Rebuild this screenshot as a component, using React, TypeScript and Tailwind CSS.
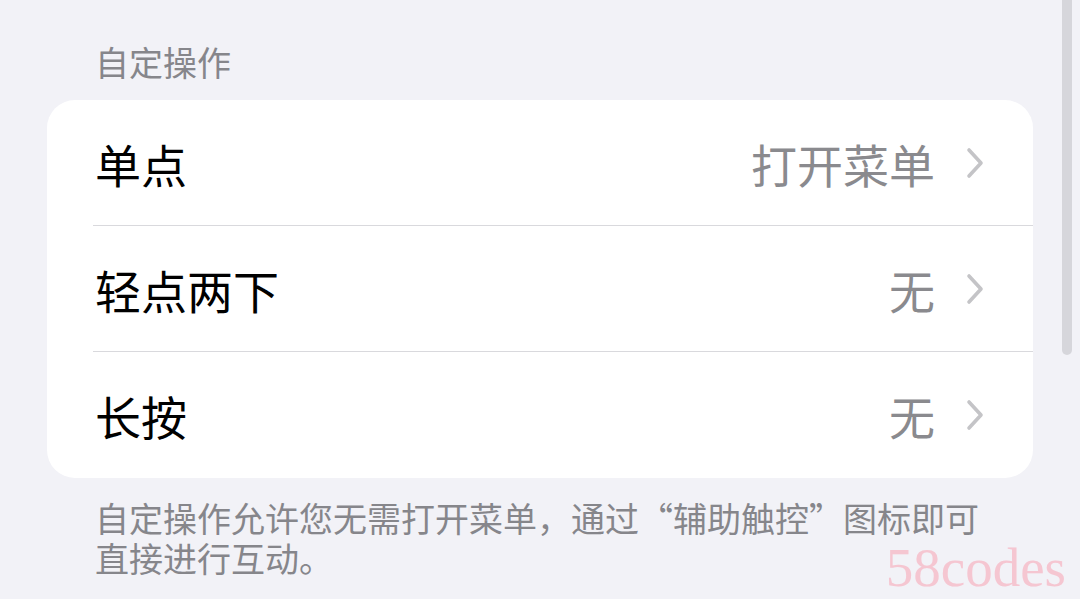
import React from 'react';

const rows = [
  { label: '单点', value: '打开菜单' },
  { label: '轻点两下', value: '无' },
  { label: '长按', value: '无' },
];

const Chevron: React.FC = () => (
  <svg width="20" height="32" viewBox="0 0 20 32" fill="none" className="shrink-0">
    <polyline
      points="4,3 16,16 4,29"
      stroke="#c4c4c7"
      strokeWidth="3.6"
      strokeLinecap="round"
      strokeLinejoin="round"
    />
  </svg>
);

const App: React.FC = () => {
  return (
    <div
      className="relative w-[1080px] h-[599px] overflow-hidden bg-[#f2f2f7] px-[47px]"
      style={{ fontFamily: '"Noto Sans CJK SC", "Noto Sans", sans-serif' }}
    >
      {/* section header */}
      <div className="pt-[42px] pb-[18px] pl-[48px] text-[34px] leading-[40px] text-[#86868b]">
        自定操作
      </div>

      {/* card */}
      <div className="bg-white rounded-[28px] overflow-hidden">
        {rows.map((row, i) => (
          <div key={row.label} className="pl-[46px]">
            <div
              className={
                'h-[126px] flex items-center justify-between pr-[48px] ' +
                (i < rows.length - 1 ? 'border-b border-[#d9d9dd]' : '')
              }
            >
              <span className="pl-[2px] text-[46px] leading-none text-black">{row.label}</span>
              <div className="flex items-center gap-[30px]">
                <span className="text-[46px] leading-none text-[#8a8a8e]">{row.value}</span>
                <Chevron />
              </div>
            </div>
          </div>
        ))}
      </div>

      {/* footer note */}
      <div className="mt-[20px] pl-[48px] pr-[40px] text-[34px] leading-[40px] text-[#86868b]">
        <div>自定操作允许您无需打开菜单，通过“辅助触控”图标即可</div>
        <div>直接进行互动。</div>
      </div>

      {/* scroll indicator */}
      <div className="absolute right-[8px] top-0 w-[10px] h-[355px] rounded-b-full bg-[#d6d6db]" />

      {/* watermark */}
      <div
        className="absolute right-[14px] bottom-[4px] text-[55px] leading-none text-[#f5c6d1]"
        style={{ fontFamily: '"Liberation Serif", serif' }}
      >
        58codes
      </div>
    </div>
  );
};

export default App;
